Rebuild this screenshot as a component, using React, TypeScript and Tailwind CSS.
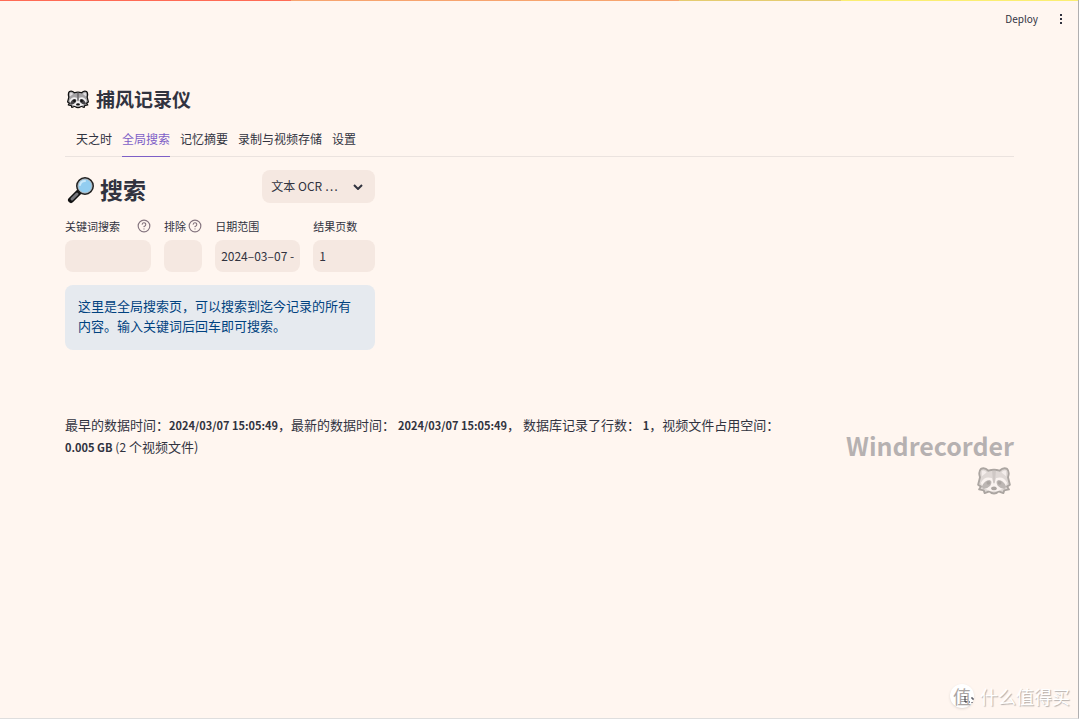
import { useState } from "react"

const tabs = ["天之时", "全局搜索", "记忆摘要", "录制与视频存储", "设置"]

function Raccoon({ className }: { className?: string }) {
  return (
    <svg viewBox="0 0 36 30" className={className} aria-hidden="true">
      <path
        d="M4 2 Q8 0 12 4 Q18 2 24 4 Q28 0 32 2 Q35 5 33 11 L35 19 L32 21 L34 24 L29 25 L28 28 L23 26 Q18 31 13 26 L8 28 L7 25 L2 24 L4 21 L1 19 L3 11 Q1 5 4 2Z"
        fill="#a5a3a5"
        stroke="#111"
        strokeWidth="2"
        strokeLinejoin="round"
      />
      <path d="M5 4 Q8 3 10 6 L5 10Z M31 4 Q28 3 26 6 L31 10Z" fill="#e2dfe2" />
      <path d="M4 17 Q8 9 16 12 L18 19 L20 12 Q28 9 32 17 L30 22 L22 26 L14 26 L6 22Z" fill="#f2f0f1" />
      <path d="M5 21 Q8 14 13 14 Q17 15 14 20 Q10 24 6 23Z M31 21 Q28 14 23 14 Q19 15 22 20 Q26 24 30 23Z" fill="#454346" />
      <path d="M16 4 H20 L19 17 H17Z" fill="#777477" />
      <circle cx="12" cy="17" r="2" fill="#111" />
      <circle cx="24" cy="17" r="2" fill="#111" />
      <ellipse cx="18" cy="23" rx="3" ry="2" fill="#111" />
    </svg>
  )
}

function Magnifier() {
  return (
    <svg viewBox="0 0 28 28" className="size-7" aria-hidden="true">
      <path d="M4 24 L12 16" stroke="#111" strokeWidth="6" strokeLinecap="round" />
      <path d="M5 23 L10 18" stroke="#77777c" strokeWidth="3" strokeLinecap="round" />
      <circle cx="18" cy="10" r="8" fill="#92cdf0" stroke="#222" strokeWidth="2" />
      <circle cx="18" cy="10" r="7" fill="none" stroke="#b9c3ca" />
      <path d="M13 9 Q14 5 18 5" fill="none" stroke="#c9e8fa" strokeWidth="2" strokeLinecap="round" />
    </svg>
  )
}

function Help() {
  return (
    <svg
      viewBox="0 0 24 24"
      className="size-[14px] shrink-0"
      fill="none"
      stroke="#85757f"
      strokeWidth="2"
      strokeLinecap="round"
      strokeLinejoin="round"
      aria-hidden="true"
    >
      <circle cx="12" cy="12" r="10" />
      <path d="M9 9a3 3 0 0 1 6 1c0 2-3 3-3 3M12 17h.01" />
    </svg>
  )
}

function Field({ id, label, help, value = "" }: { id: string; label: string; help?: boolean; value?: string }) {
  return (
    <div className="min-w-0">
      <label htmlFor={id} className="mb-[2px] flex h-6 items-center justify-between whitespace-nowrap text-[11px]">
        {label}
        {help && <Help />}
      </label>
      <input
        id={id}
        type="text"
        defaultValue={value}
        className="h-8 w-full rounded-lg bg-[#f5e8e1] px-[6px] pb-[2px] text-[12px] outline-none"
      />
    </div>
  )
}

export default function App() {
  const [active, setActive] = useState("全局搜索")

  return (
    <div className="flex min-h-screen flex-col border-r border-b border-r-[#b0afb0] border-b-[#dedede] bg-[#fff6f0] font-['Noto_Sans_CJK_SC',sans-serif] text-[13px] text-[#31333f]">
      {/* Top stripe */}
      <div className="flex h-px">
        <div className="w-[27%] bg-[#ff6b55]" />
        <div className="w-[36%] bg-[#f7a46f]" />
        <div className="w-[15%] bg-[#e5cc70]" />
        <div className="grow bg-[#fbee72]" />
      </div>

      <header className="flex h-9 items-center justify-end gap-[18px] pr-3">
        <button className="pb-[2px] text-[10px]">Deploy</button>
        <button aria-label="Menu" className="flex w-[10px] flex-col items-center gap-[2px]">
          <span className="size-[2px] bg-[#31333f]" />
          <span className="size-[2px] bg-[#31333f]" />
          <span className="size-[2px] bg-[#31333f]" />
        </button>
      </header>

      <main className="grow pt-[46px] pr-16 pl-[65px]">
        <h1 className="flex h-8 items-center gap-[7px] pl-[2px] text-[19px] font-bold">
          <Raccoon className="h-[19px] w-[22px]" />
          <span>捕风记录仪</span>
        </h1>

        <nav className="mt-2 flex h-[34px] gap-[10px] border-b border-[#ebe3df] pl-[11px]">
          {tabs.map((tab) => (
            <button
              key={tab}
              onClick={() => setActive(tab)}
              className={
                tab === active
                  ? "-mb-px border-b border-[#7e5fc7] pb-[2px] text-[12px] text-[#7e5fc7]"
                  : "-mb-px border-b border-transparent pb-[2px] text-[12px]"
              }
            >
              {tab}
            </button>
          ))}
        </nav>

        {/* Search form */}
        <section className="w-1/3 min-w-[310px] pt-[13px] pr-[6px]">
          <div className="flex items-start justify-between">
            <h2 className="flex h-10 items-center gap-[5px] pl-[2px] text-[23px] font-bold">
              <Magnifier />
              <span className="pb-[2px]">搜索</span>
            </h2>
            <div className="relative w-[113px]">
              <select
                aria-label="搜索方式"
                className="h-[33px] w-full appearance-none rounded-lg bg-[#f5e8e1] pb-px pl-[9px] text-[12px] outline-none"
              >
                <option>文本 OCR …</option>
              </select>
              <svg
                viewBox="0 0 10 6"
                className="pointer-events-none absolute top-[14px] right-3 h-[6px] w-[10px]"
                fill="none"
                stroke="#31333f"
                strokeWidth="2"
                aria-hidden="true"
              >
                <path d="M1 1 L5 5 L9 1" />
              </svg>
            </div>
          </div>

          <div className="mt-1 grid grid-cols-[86fr_38fr_85fr_62fr] gap-[13px]">
            <Field id="keyword" label="关键词搜索" help />
            <Field id="exclude" label="排除" help />
            <Field id="range" label="日期范围" value="2024–03–07 -" />
            <Field id="pages" label="结果页数" value="1" />
          </div>

          <p className="mt-[13px] rounded-lg bg-[#e6eaef] px-[13px] pt-[11px] pb-[14px] leading-5 text-[#004280]">
            这里是全局搜索页，可以搜索到迄今记录的所有内容。输入关键词后回车即可搜索。
          </p>
        </section>

        {/* Database status */}
        <section className="mt-16 flex items-start justify-between">
          <p className="w-[76%] leading-[21px]">
            最早的数据时间：<b className="text-[11px]">2024/03/07 15:05:49</b>，最新的数据时间：{" "}
            <b className="text-[11px]">2024/03/07 15:05:49</b>， 数据库记录了行数： <b className="text-[11px]">1</b>
            ，视频文件占用空间： <b className="text-[11px]">0.005 GB</b> <span className="text-[12px]">(2</span> 个视频文件)
          </p>
          <div className="flex flex-col items-end pt-[13px] opacity-35">
            <h2 className="text-[25px] leading-9 font-bold">Windrecorder</h2>
            <Raccoon className="mt-1 mr-[3px] h-7 w-[34px]" />
          </div>
        </section>
      </main>

      <footer className="flex items-center justify-end gap-[6px] pr-2 pb-[10px]">
        <div className="relative flex size-6 items-center justify-center rounded-full bg-white text-[18px] leading-6 text-[#aaa5a3] shadow-sm">
          值
          <svg viewBox="0 0 10 8" className="absolute right-0 bottom-1 h-2 w-[10px]" aria-hidden="true">
            <path d="M1 0V6H3M5 6H6M8 1V3H10M8 6V7" fill="none" stroke="#31333f" />
          </svg>
        </div>
        <span className="text-[18px] leading-6 text-white [text-shadow:1px_1px_1px_#b5aeab]">什么值得买</span>
      </footer>
    </div>
  )
}
